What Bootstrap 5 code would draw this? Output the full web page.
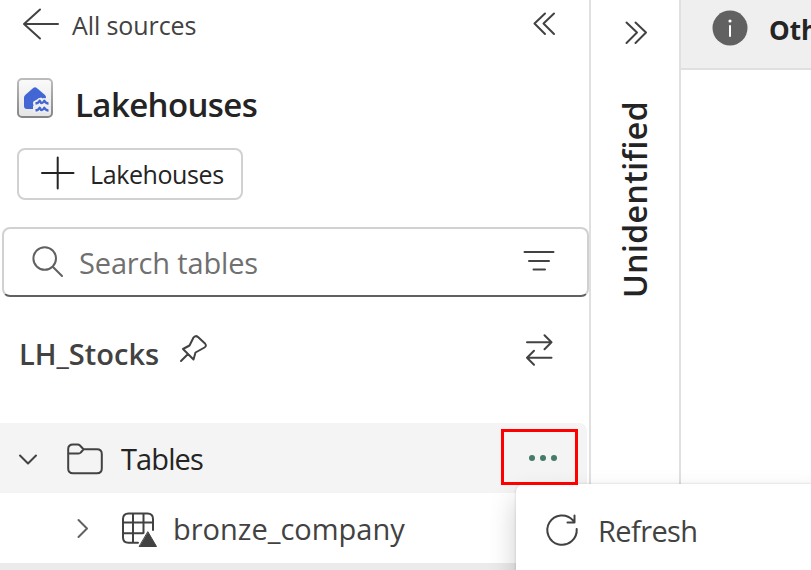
<!DOCTYPE html>
<html lang="en">
<head>
<meta charset="utf-8">
<meta name="viewport" content="width=device-width, initial-scale=1">
<title>Lakehouses</title>
<link href="https://cdn.jsdelivr.net/npm/bootstrap@5.3.0/dist/css/bootstrap.min.css" rel="stylesheet">
<style>
body{font-family:"Open Sans","Noto Sans",sans-serif;color:#424242;font-size:29px;line-height:1}
svg{display:block;flex:none;fill:none;stroke:#424242;stroke-width:2;stroke-linecap:round;stroke-linejoin:round}
.app{height:570px}
.explorer{width:591px;border-right:2px solid #e0e0e0}
.rail{width:90px;border-right:2px solid #e0e0e0}
.back-row{height:50px;font-size:25px;letter-spacing:-.1px}
.title-row{height:98px;padding-top:12px}
.title-row h1{font-size:33px;font-weight:600;color:#242424;letter-spacing:-.6px;margin:23px 0 0 0}
.add-btn{width:226px;height:52px;margin-left:17px;border:2px solid #d1d1d1;border-radius:8px;font-size:25px;color:#242424;line-height:1;letter-spacing:-.4px}
.search-box{height:70px;margin:27px 0 0 2px;border:2px solid #d1d1d1;border-bottom-color:#616161;border-radius:8px;color:#707070;letter-spacing:-.15px}
.source-row{height:106px;margin-top:3px}
.source-row h2{font-size:29px;font-weight:600;padding:2px 14px 0 19px}
.tree-row{height:70px}
.tree-row.active-row{background:#f4f4f4;color:#242424;border-radius:0 8px 8px 0;width:587px;margin-top:17px;letter-spacing:-.9px}
.next-row{height:7px;background:#ebebeb}
.vertical-label{writing-mode:vertical-rl;transform:rotate(180deg);font-weight:600;font-size:32px;line-height:40px;color:#242424;letter-spacing:.4px}
.notice{height:70px;background:#efefef;border-bottom:2px solid #e0e0e0;font-size:26px;font-weight:700;color:#242424}
.notice span{margin-top:17px}
.highlight-frame{left:501px;top:429px;width:77px;height:56px;border:3px solid #f00}
.context-menu{left:516px;top:484px;width:330px;height:130px;border-radius:8px;background:#fff;box-shadow:0 0 3px rgba(0,0,0,.16),0 14px 28px rgba(0,0,0,.2);letter-spacing:-.6px}
</style>
<script src="https://cdn.jsdelivr.net/npm/bootstrap@5.3.0/dist/js/bootstrap.bundle.min.js"></script>
</head>
<body class="bg-white overflow-hidden">
<div class="app d-flex position-relative overflow-hidden text-nowrap">
  <aside class="explorer flex-shrink-0">
    <div class="back-row d-flex align-items-center">
      <svg width="72" height="50" viewBox="0 0 72 50"><path d="M58 24H24M40 9.500 24 24l16 14.500"/></svg>
      <span>All sources</span>
      <svg class="ms-auto" width="59" height="50" viewBox="530 0 59 50"><path d="M545 13.500 534.500 23.500 545 34M554 13.500 543.500 23.500 554 34"/></svg>
    </div>
    <div class="title-row d-flex align-items-start">
      <svg width="75" height="60" viewBox="0 62 75 60">
        <defs>
          <linearGradient id="tile" x1="0" y1="0" x2="0" y2="1"><stop stop-color="#fafafa"/><stop offset="1" stop-color="#e5e5e5"/></linearGradient>
          <linearGradient id="edge" x1="0" y1="0" x2="0" y2="1"><stop stop-color="#bcbcbc"/><stop offset="1" stop-color="#858585"/></linearGradient>
        </defs>
        <rect x="18" y="79" width="34" height="38" rx="4" fill="url(#tile)" stroke="url(#edge)"/>
        <path d="M24 97.500Q24 96 25.200 95L33.200 88Q35 86.600 36.800 88L45 95Q46 96 46 97.500V98L43.500 99 41 97.500 37 99.500 33.500 101.500 35 104 33 106 33 109H27Q24 109 24 106Z" fill="#4267d5" stroke="none"/>
        <path d="M35.500 103.500Q38.500 103 39.700 100.700Q41.800 105.400 44.300 100.700Q45.800 103.500 48.500 103.500M35.500 110.500Q38.500 110 39.700 107.700Q41.800 112.400 44.300 107.700Q45.800 110.500 48.500 110.500" stroke="#efefef" stroke-width="5"/>
        <path d="M35.500 103.500Q38.500 103 39.700 100.700Q41.800 105.400 44.300 100.700Q45.800 103.500 48.500 103.500M35.500 110.500Q38.500 110 39.700 107.700Q41.800 112.400 44.300 107.700Q45.800 110.500 48.500 110.500" stroke="#4267d5" stroke-width="2.400" stroke-linecap="butt"/>
      </svg>
      <h1>Lakehouses</h1>
    </div>
    <button class="add-btn btn bg-white p-0 d-flex align-items-center" type="button">
      <svg width="71" height="48" viewBox="19 150 71 48" style="stroke:#242424"><path d="M42 173H73.500M57.700 157.500V188.500"/></svg>
      <span>Lakehouses</span>
    </button>
    <div class="search-box d-flex align-items-center">
      <svg width="75" height="66" viewBox="4 229 75 66" style="stroke:#616161"><circle cx="44.700" cy="258.500" r="11.300"/><path d="M53 267 62 276"/></svg>
      <span>Search tables</span>
      <svg class="ms-auto" width="67" height="66" viewBox="520 229 67 66"><path d="M524.500 252H553.500M529 261H549M533.500 269.500H545"/></svg>
    </div>
    <div class="source-row d-flex align-items-center">
      <h2 class="mb-0">LH_Stocks</h2>
      <svg width="40" height="60" viewBox="173 323 40 60"><path d="M181 361 188 354M183 349 193.500 359.500 195.500 352.500 204.500 347.500Q207 346 205 343.500L198 337Q195.500 335 193.500 337.500L189.500 345.500Z"/></svg>
      <svg class="ms-auto" width="69" height="60" viewBox="520 323 69 60"><path d="M527 342.300H551.500M544.500 335.300 551.500 342.300 544.500 349.300M551.500 357.700H527M534 350.700 527 357.700 534 364.700"/></svg>
    </div>
    <div class="tree-row active-row d-flex align-items-center">
      <svg width="121" height="70" viewBox="0 423 121 70"><path d="M20 455.500 28 463.500 36 455.500M68.200 449V468.500Q68.200 473.300 73 473.300H97Q101.800 473.300 101.800 468.500V454Q101.800 449.300 97 449.300H83.500L80 445.500Q79 444.500 77.500 444.500H73Q68.200 444.500 68.200 449ZM68.200 453.500H78.500Q80 453.500 80.800 452.500L83.500 449.300"/></svg>
      <span>Tables</span>
      <svg class="ms-auto" width="67" height="70" viewBox="520 423 67 70" style="fill:#437c67;stroke:none"><circle cx="532" cy="458" r="3"/><circle cx="543" cy="458" r="3"/><circle cx="554" cy="458" r="3"/></svg>
    </div>
    <div class="tree-row d-flex align-items-center">
      <svg width="173" height="70" viewBox="0 493 173 70"><path d="M78.500 520 87 528.500 78.500 537" stroke="#616161"/><path d="M138 542.700H128.500Q123 542.700 123 537.500V519Q123 513.500 128.500 513.500H147.500Q153 513.500 153 519V530M133 514V542M143.500 514V533M123 522.500H153M123 533.200H143"/><path d="M148 531.500 157 547H139Z" fill="#424242" stroke="#fff" stroke-width="3"/><path d="M148 532 156.500 546.500H139.500Z" fill="#424242" stroke-width="1"/></svg>
      <span>bronze_company</span>
    </div>
    <div class="next-row"></div>
  </aside>
  <nav class="rail flex-shrink-0 d-flex flex-column align-items-center">
    <svg width="88" height="101" viewBox="591 0 88 101"><path d="M626.500 22.500 637 32.500 626.500 43M635.500 22.500 646 32.500 635.500 43"/></svg>
    <span class="vertical-label">Unidentified</span>
  </nav>
  <main class="flex-grow-1 overflow-hidden">
    <div class="notice d-flex align-items-start">
      <svg width="88" height="68" viewBox="681 0 88 68"><circle cx="730" cy="28" r="17.500" fill="#616161" stroke="none"/><path d="M730 26V36" stroke="#fff"/><circle cx="730" cy="21" r="1.600" fill="#fff" stroke="none"/></svg>
      <span>Other</span>
    </div>
  </main>
  <div class="context-menu position-absolute d-flex align-items-start">
    <svg width="82" height="92" viewBox="516 484 82 92"><path d="M576.700 529A14.700 14.700 0 1 1 573 520.300L574.500 522M574.500 515.500V522.500H567.500"/></svg>
    <span class="mt-3 pt-3">Refresh</span>
  </div>
  <div class="highlight-frame position-absolute"></div>
</div>
</body>
</html>
